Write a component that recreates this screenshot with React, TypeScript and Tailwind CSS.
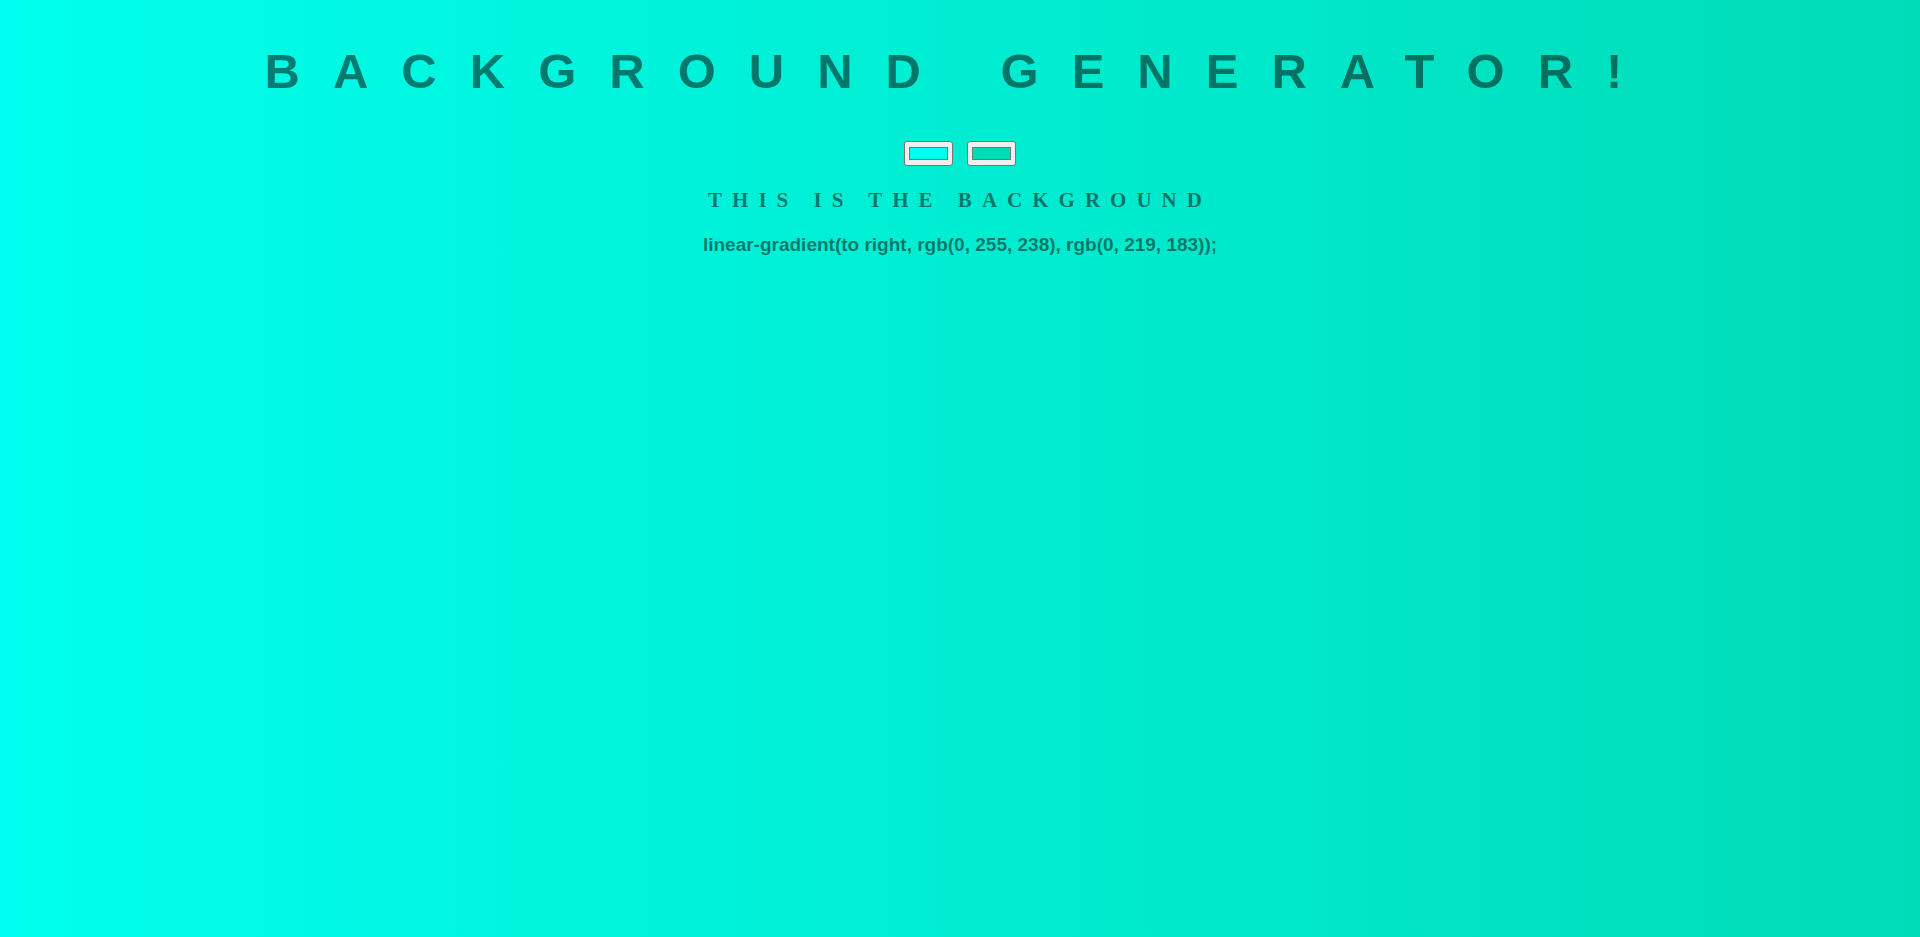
const swatches = ["#00ffee", "#00dbb7"];

export default function App() {
  return (
    <main className="min-h-screen bg-linear-to-r from-[#00ffee] to-[#00dbb7] text-black/50 text-center pt-[43px]">
      <h1 className="text-[49px] leading-[56px] font-bold tracking-[33px] font-['Liberation_Sans',Arial,sans-serif]">
        BACKGROUND GENERATOR!
      </h1>

      <div className="flex justify-center gap-[14px] mt-[42px]">
        {swatches.map((c) => (
          <button
            key={c}
            className="w-[49px] h-[25px] px-[4px] py-[5px] bg-[#efefef] border border-[#767676] rounded-[3px]"
          >
            <div className="w-full h-full border border-[#777777]" style={{ backgroundColor: c }} />
          </button>
        ))}
      </div>

      <h3 className="mt-[22px] text-[21px] leading-[24px] font-bold tracking-[10px] font-['Liberation_Serif','Times_New_Roman',serif]">
        THIS IS THE BACKGROUND
      </h3>

      <h3 className="mt-[22px] text-[19px] leading-[22px] font-bold font-['Liberation_Sans',Arial,sans-serif]">
        linear-gradient(to right, rgb(0, 255, 238), rgb(0, 219, 183));
      </h3>
    </main>
  );
}
